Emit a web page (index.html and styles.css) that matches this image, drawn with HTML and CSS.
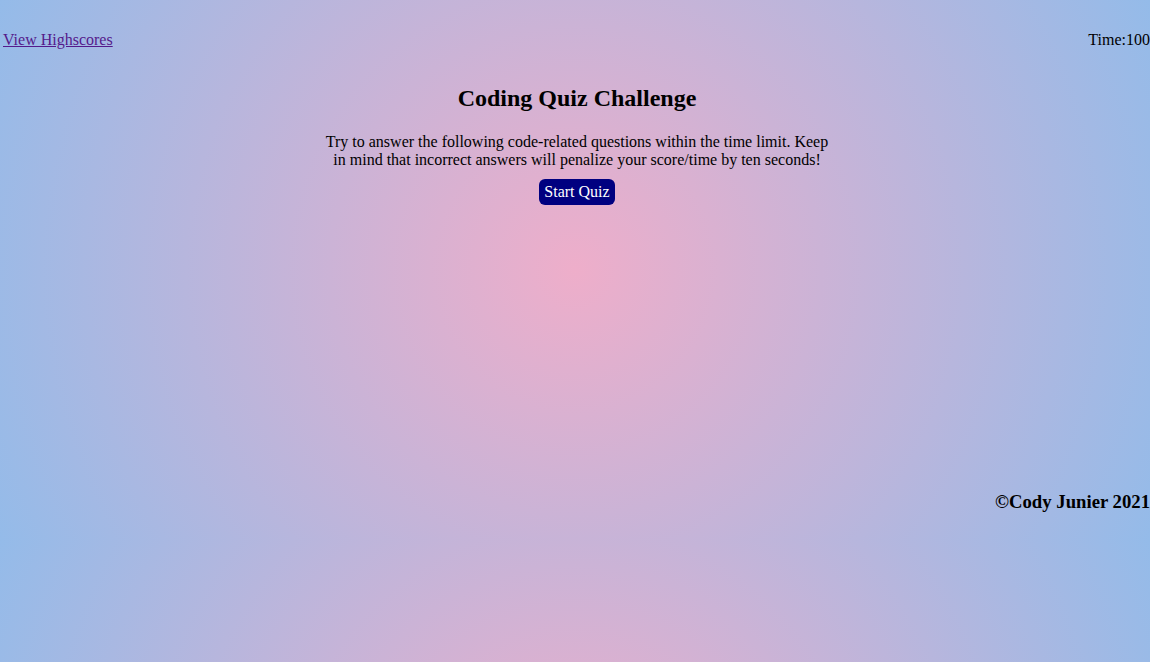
FILE: index.html
```html
<!DOCTYPE html>
<html lang="en">
<head>
<meta charset="utf-8">
<title>Coding Quiz Challenge</title>
<link rel="stylesheet" href="styles.css">
</head>
<body>
<header class="top-bar">
  <a class="highscores-link" href="#">View Highscores</a>
  <p class="timer">Time:<span class="timer-value">100</span></p>
</header>
<main class="intro">
  <h2 class="intro-title">Coding Quiz Challenge</h2>
  <p class="intro-text">Try to answer the following code-related questions within the time limit. Keep in mind that incorrect answers will penalize your score/time by ten seconds!</p>
  <button class="start-btn" type="button">Start Quiz</button>
</main>
<footer class="site-footer">
  <h3 class="copyright">&copy;Cody Junier 2021</h3>
</footer>
</body>
</html>
```
FILE: styles.css
```css
html {
  background: radial-gradient(circle, rgb(238, 174, 202) 0%, rgb(148, 187, 233) 100%) 0 0 / 100% 540px repeat;
}

body {
  margin: 0;
  font-family: "Liberation Serif", "Times New Roman", serif;
  font-size: 16px;
  color: #000;
}

.top-bar {
  display: flex;
  justify-content: space-between;
  align-items: center;
  padding: 31px 0 0 3px;
}

.highscores-link {
  color: #551a8b;
  text-decoration: underline;
}

.timer {
  margin: 0;
}

.intro {
  display: flex;
  flex-direction: column;
  align-items: center;
  text-align: center;
  margin-top: 36px;
  padding-left: 4px;
}

.intro-title {
  font-size: 24px;
  font-weight: bold;
  margin: 0 0 21px;
}

.intro-text {
  width: 510px;
  margin: 0 0 10px;
}

.start-btn {
  font-family: "Liberation Serif", "Times New Roman", serif;
  font-size: 16px;
  color: #fff;
  background: #000080;
  border: none;
  border-radius: 6px;
  padding: 4px 5px;
  cursor: pointer;
}

.site-footer {
  margin-top: 286px;
  text-align: right;
}

.copyright {
  font-size: 18.72px;
  font-weight: bold;
  margin: 0;
}
```
